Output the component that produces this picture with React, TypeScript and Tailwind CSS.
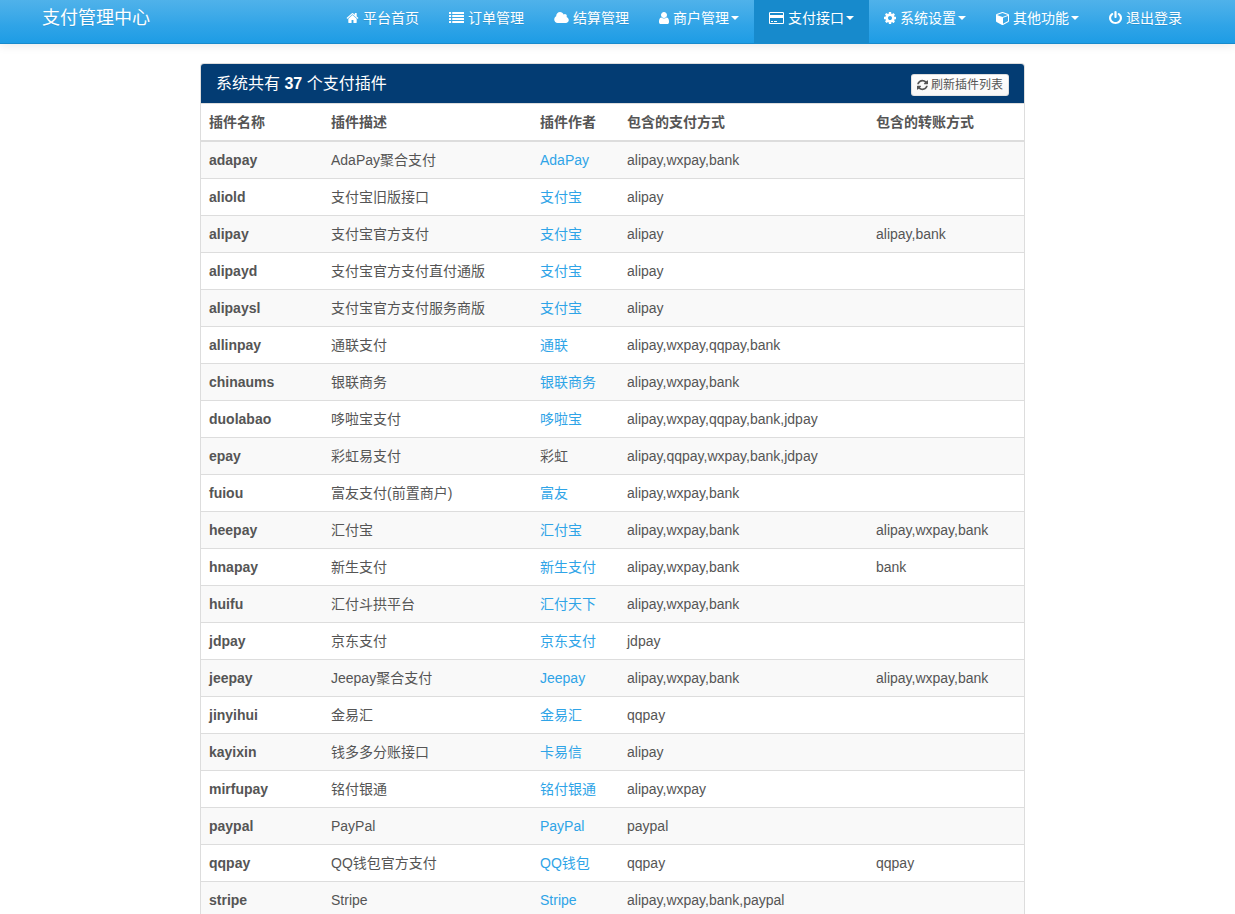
import type { ReactNode } from "react";
import clsx from "clsx";

interface IconProps {
  width: number;
  className: string;
  children: ReactNode;
}

function Icon({ width, className, children }: IconProps) {
  return (
    <svg
      viewBox={`0 0 ${width} 1792`}
      fill="currentColor"
      preserveAspectRatio="none"
      aria-hidden="true"
      className={clsx("shrink-0", className)}
    >
      {children}
    </svg>
  );
}

const icons = {
  home: (
    <Icon width={1792} className="h-3.5 w-[13px]">
      <path d="M1472 992v480q0 26-19 45t-45 19h-384v-384h-256v384h-384q-26 0-45-19t-19-45v-480q0-1 .5-3t.5-3l575-474 575 474q1 2 1 6zm223-69l-62 74q-8 9-21 11h-3q-13 0-21-7l-692-577-692 577q-12 8-24 7-13-2-21-11l-62-74q-8-10-7-23.500t11-21.500l719-599q32-26 76-26t76 26l244 204v-195q0-14 9-23t23-9h192q14 0 23 9t9 23v408l219 182q10 8 11 21.500t-7 23.500z" />
    </Icon>
  ),
  list: (
    <Icon width={1792} className="h-3.5 w-[15px]">
      {[256, 640, 1024, 1408].map((y) => (
        <g key={y}>
          <rect x="0" y={y - 128} width="256" height="256" rx="32" />
          <rect x="384" y={y - 128} width="1408" height="256" rx="32" />
        </g>
      ))}
    </Icon>
  ),
  cloud: (
    <Icon width={1984} className="h-3.5 w-[15px]">
      <path d="M1952 1152q0 159-112.500 271.500t-271.500 112.500h-1088q-185 0-316.500-131.500t-131.500-316.500q0-132 71-241.500t187-163.500q-2-28-2-43 0-212 150-362t362-150q158 0 286.500 88t187.500 230q70-62 166-62 106 0 181 75t75 181q0 75-41 138 129 30 213 134.500t84 239.500z" />
    </Icon>
  ),
  user: (
    <Icon width={1280} className="h-3.5 w-[10px]">
      <path
        transform="translate(-256 0)"
        d="M1536 1399q0 109-62.500 187t-150.500 78h-854q-88 0-150.500-78t-62.500-187q0-85 8.500-160.500t31.500-152 58.500-131 94-89 134.500-34.500q131 128 313 128t313-128q76 0 134.500 34.500t94 89 58.500 131 31.500 152 8.500 160.500zm-256-887q0 159-112.500 271.500t-271.500 112.500-271.500-112.500-112.500-271.500 112.500-271.500 271.500-112.500 271.500 112.500 112.500 271.500z"
      />
    </Icon>
  ),
  card: (
    <Icon width={1920} className="h-3.5 w-[15px]">
      <path
        fillRule="evenodd"
        d="M160 128h1600q66 0 113 47t47 113v1216q0 66-47 113t-113 47h-1600q-66 0-113-47t-47-113v-1216q0-66 47-113t113-47zM160 256q-32 0-32 32v224h1664v-224q0-32-32-32zM128 896v608q0 32 32 32h1600q32 0 32-32v-608zM256 1408v-128h256v128zM640 1408v-128h384v128z"
      />
    </Icon>
  ),
  cog: (
    <Icon width={1536} className="h-3.5 w-3">
      <path
        transform="translate(-128 0)"
        d="M1152 896q0-106-75-181t-181-75-181 75-75 181 75 181 181 75 181-75 75-181zm512-109v222q0 12-8 23t-20 13l-185 28q-19 54-39 91 35 50 107 138 10 12 10 25t-9 23q-27 37-99 108t-94 71q-12 0-26-9l-138-108q-44 23-91 38-16 136-29 186-7 28-36 28h-222q-14 0-24.500-8.500t-11.500-21.500l-28-184q-49-16-90-37l-141 107q-10 9-25 9-14 0-25-11-126-114-165-168-7-10-7-23 0-12 8-23 15-21 51-66.500t54-70.500q-27-50-41-99l-183-27q-13-2-21-12.500t-8-23.500v-222q0-12 8-23t19-13l186-28q14-46 39-92-40-57-107-138-10-12-10-24 0-10 9-23 26-36 98.500-107.500t94.500-71.500q13 0 26 10l138 107q44-23 91-38 16-136 29-186 7-28 36-28h222q14 0 24.500 8.500t11.500 21.500l28 184q49 16 90 37l142-107q9-9 24-9 13 0 25 10 129 119 165 170 7 8 7 22 0 12-8 23-15 21-51 66.500t-54 70.500q26 50 41 98l183 28q13 2 21 12.500t8 23.500z"
      />
    </Icon>
  ),
  cube: (
    <Icon width={1664} className="h-3.5 w-[13px]">
      <path d="M896 1629l640-349v-636l-640 233v752zm-64-865l698-254-698-254-698 254zm832-252v768q0 35-18 65t-49 47l-704 384q-28 16-61 16t-61-16l-704-384q-31-17-49-47t-18-65v-768q0-40 23-73t61-47l704-256q22-8 44-8t44 8l704 256q38 14 61 47t23 73z" />
    </Icon>
  ),
  power: (
    <Icon width={1536} className="h-3.5 w-[13px]">
      <path
        transform="translate(-128 0)"
        d="M1664 896q0 156-61 298t-164 245-245 164-298 61-298-61-245-164-164-245-61-298q0-182 80.500-343t226.500-270q43-32 95.500-25t83.500 50q32 42 24.500 94.500t-49.500 84.500q-98 74-151.500 181t-53.500 228q0 104 40.500 198.500t109.500 163.500 163.500 109.500 198.500 40.500 198.500-40.500 163.500-109.500 109.500-163.500 40.500-198.500q0-121-53.500-228t-151.500-181q-42-32-49.500-84.500t24.500-94.500q31-43 84-50t95 25q146 109 226.500 270t80.500 343zm-640-768v640q0 52-38 90t-90 38-90-38-38-90v-640q0-52 38-90t90-38 90 38 38 90z"
      />
    </Icon>
  ),
  refresh: (
    <Icon width={1536} className="h-3 w-[11px]">
      <path
        transform="translate(-128 0)"
        d="M1639 1056q0 5-1 7-64 268-268 434.500t-478 166.500q-146 0-282.500-55t-243.500-157l-129 129q-19 19-45 19t-45-19-19-45v-448q0-26 19-45t45-19h448q26 0 45 19t19 45-19 45l-137 137q71 66 161 102t187 36q134 0 250-65t186-179q11-17 53-117 8-23 30-23h192q13 0 22.500 9.500t9.500 22.500zm25-800v448q0 26-19 45t-45 19h-448q-26 0-45-19t-19-45 19-45l138-138q-148-137-349-137-134 0-250 65t-186 179q-11 17-53 117-8 23-30 23h-199q-13 0-22.500-9.500t-9.500-22.500v-7q65-268 270-434.500t480-166.500q146 0 284 55.500t245 156.500l130-129q19-19 45-19t45 19 19 45z"
      />
    </Icon>
  ),
};

interface NavEntry {
  label: string;
  icon: ReactNode;
  menu?: boolean;
  active?: boolean;
}

const navEntries: NavEntry[] = [
  { label: "平台首页", icon: icons.home },
  { label: "订单管理", icon: icons.list },
  { label: "结算管理", icon: icons.cloud },
  { label: "商户管理", icon: icons.user, menu: true },
  { label: "支付接口", icon: icons.card, menu: true, active: true },
  { label: "系统设置", icon: icons.cog, menu: true },
  { label: "其他功能", icon: icons.cube, menu: true },
  { label: "退出登录", icon: icons.power },
];

interface Plugin {
  name: string;
  desc: string;
  author: string;
  pay: string;
  transfer?: string;
  noLink?: boolean;
}

const plugins: Plugin[] = [
  { name: "adapay", desc: "AdaPay聚合支付", author: "AdaPay", pay: "alipay,wxpay,bank" },
  { name: "aliold", desc: "支付宝旧版接口", author: "支付宝", pay: "alipay" },
  { name: "alipay", desc: "支付宝官方支付", author: "支付宝", pay: "alipay", transfer: "alipay,bank" },
  { name: "alipayd", desc: "支付宝官方支付直付通版", author: "支付宝", pay: "alipay" },
  { name: "alipaysl", desc: "支付宝官方支付服务商版", author: "支付宝", pay: "alipay" },
  { name: "allinpay", desc: "通联支付", author: "通联", pay: "alipay,wxpay,qqpay,bank" },
  { name: "chinaums", desc: "银联商务", author: "银联商务", pay: "alipay,wxpay,bank" },
  { name: "duolabao", desc: "哆啦宝支付", author: "哆啦宝", pay: "alipay,wxpay,qqpay,bank,jdpay" },
  { name: "epay", desc: "彩虹易支付", author: "彩虹", pay: "alipay,qqpay,wxpay,bank,jdpay", noLink: true },
  { name: "fuiou", desc: "富友支付(前置商户)", author: "富友", pay: "alipay,wxpay,bank" },
  { name: "heepay", desc: "汇付宝", author: "汇付宝", pay: "alipay,wxpay,bank", transfer: "alipay,wxpay,bank" },
  { name: "hnapay", desc: "新生支付", author: "新生支付", pay: "alipay,wxpay,bank", transfer: "bank" },
  { name: "huifu", desc: "汇付斗拱平台", author: "汇付天下", pay: "alipay,wxpay,bank" },
  { name: "jdpay", desc: "京东支付", author: "京东支付", pay: "jdpay" },
  { name: "jeepay", desc: "Jeepay聚合支付", author: "Jeepay", pay: "alipay,wxpay,bank", transfer: "alipay,wxpay,bank" },
  { name: "jinyihui", desc: "金易汇", author: "金易汇", pay: "qqpay" },
  { name: "kayixin", desc: "钱多多分账接口", author: "卡易信", pay: "alipay" },
  { name: "mirfupay", desc: "铭付银通", author: "铭付银通", pay: "alipay,wxpay" },
  { name: "paypal", desc: "PayPal", author: "PayPal", pay: "paypal" },
  { name: "qqpay", desc: "QQ钱包官方支付", author: "QQ钱包", pay: "qqpay", transfer: "qqpay" },
  { name: "stripe", desc: "Stripe", author: "Stripe", pay: "alipay,wxpay,bank,paypal" },
];

function NavItem({ label, icon, menu, active }: NavEntry) {
  const className = clsx(
    "flex h-[43px] cursor-pointer items-center px-[15px] pb-[7px] leading-5 hover:bg-[#178acc]",
    active && "bg-[#178acc]"
  );
  const content = (
    <>
      {icon}
      <span className="ml-1">{label}</span>
    </>
  );

  if (menu) {
    return (
      <button type="button" aria-haspopup="true" className={className}>
        {content}
        <span className="ml-0.5 border-x-4 border-t-4 border-x-transparent border-t-white" />
      </button>
    );
  }
  return (
    <a href="#" className={className}>
      {content}
    </a>
  );
}

function Navbar() {
  return (
    <header className="border-b border-[#178acc] bg-linear-to-b from-[#4fb2ea] via-[#2fa4e7] via-60% to-[#1d9ce5] pr-[11px] text-white shadow-[0_1px_10px_rgba(0,0,0,0.1)]">
      <div className="mx-auto flex max-w-[1170px] justify-between [text-shadow:0_1px_0_rgba(0,0,0,0.1)]">
        <a href="#" className="flex h-[43px] items-center px-[15px] pb-[7px] text-lg leading-5">
          支付管理中心
        </a>
        <nav className="flex">
          {navEntries.map((entry) => (
            <NavItem key={entry.label} {...entry} />
          ))}
        </nav>
      </div>
    </header>
  );
}

function PluginTable() {
  return (
    <table className="w-full table-fixed text-left">
      <colgroup>
        <col className="w-[122px]" />
        <col className="w-[209px]" />
        <col className="w-[87px]" />
        <col className="w-[249px]" />
        <col />
      </colgroup>
      <thead>
        <tr className="border-t border-b-2 border-t-[#ddd] border-b-[#ddd]">
          <th className="p-2">插件名称</th>
          <th className="p-2">插件描述</th>
          <th className="p-2">插件作者</th>
          <th className="p-2">包含的支付方式</th>
          <th className="p-2">包含的转账方式</th>
        </tr>
      </thead>
      <tbody>
        {plugins.map((plugin) => (
          <tr key={plugin.name} className="border-t border-[#ddd] odd:bg-[#f9f9f9]">
            <td className="p-2 font-bold">{plugin.name}</td>
            <td className="p-2">{plugin.desc}</td>
            <td className="p-2">
              {plugin.noLink ? (
                plugin.author
              ) : (
                <a href="#" className="text-[#2fa4e7] hover:underline">
                  {plugin.author}
                </a>
              )}
            </td>
            <td className="p-2">{plugin.pay}</td>
            <td className="p-2">{plugin.transfer}</td>
          </tr>
        ))}
      </tbody>
    </table>
  );
}

export default function App() {
  return (
    <div className="bg-white font-['Liberation_Sans','Noto_Sans_CJK_SC',sans-serif] text-sm leading-5 text-[#555]">
      <Navbar />
      <main className="pt-[19px] pr-[10px]">
        <section className="mx-auto max-w-[825px] overflow-hidden rounded border border-b-0 border-[#ddd]">
          <div className="flex h-[39px] items-end justify-between bg-[#033c73] px-[15px] pb-[7px] text-white">
            <h3 className="text-base leading-6">
              系统共有 <b>37</b> 个支付插件
            </h3>
            <button
              type="button"
              className="flex h-[22px] cursor-pointer items-center gap-[3px] rounded-[3px] border border-black/10 bg-linear-to-b from-white to-[#f7f7f7] px-[5px] text-xs text-[#555]"
            >
              {icons.refresh}
              刷新插件列表
            </button>
          </div>
          <PluginTable />
        </section>
      </main>
    </div>
  );
}
